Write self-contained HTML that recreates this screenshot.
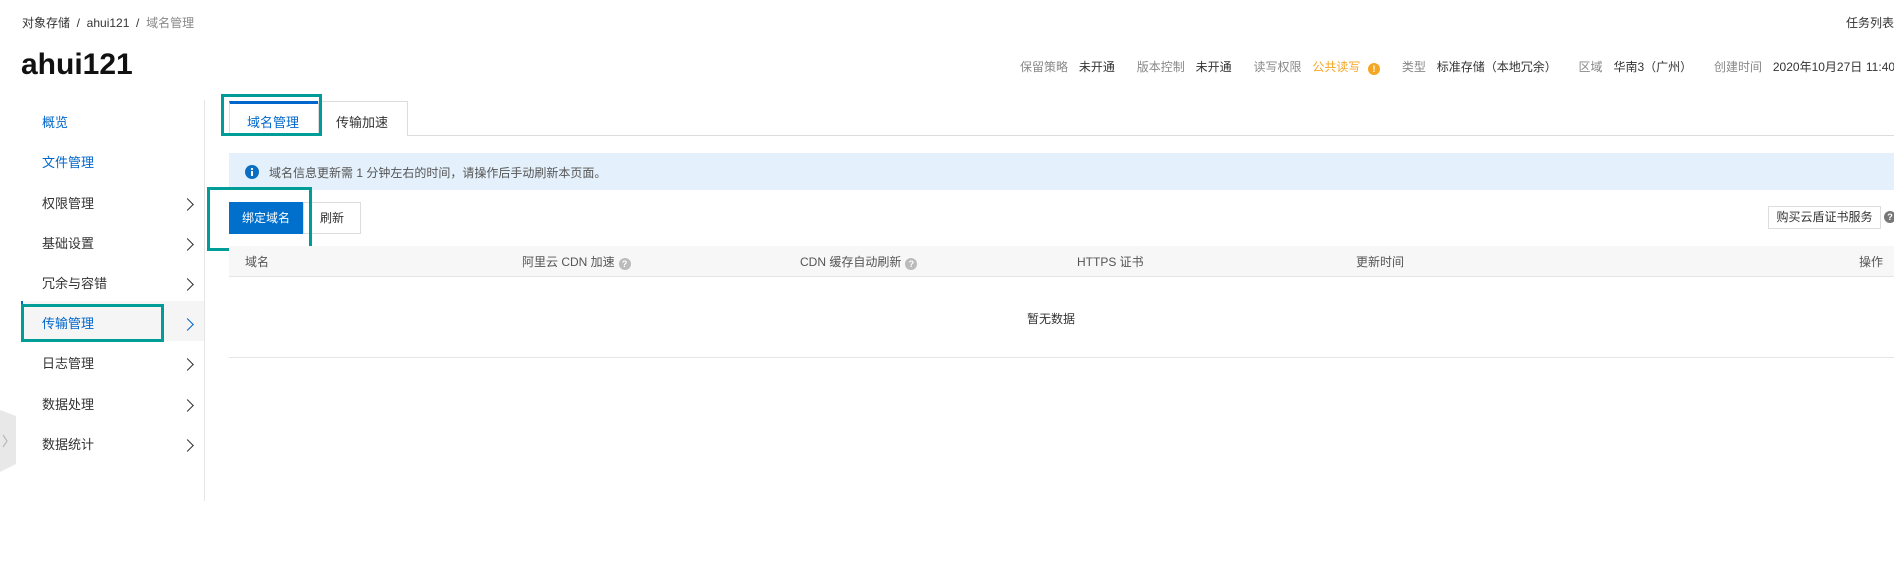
<!DOCTYPE html>
<html><head><meta charset="utf-8"><style>
*{margin:0;padding:0;box-sizing:border-box}
body{width:1894px;height:583px;background:#fff;position:relative;overflow:hidden;font-family:"Liberation Sans","Noto Sans CJK SC",sans-serif;font-size:13px;color:#333}
.a{position:absolute;white-space:nowrap}
.side{left:42px;font-size:13px;line-height:16px}
.chev{position:absolute;left:183px;width:9px;height:9px;border-right:1.5px solid #333;border-top:1.5px solid #333;transform:rotate(45deg)}
.th{top:254px;font-size:12px;color:#555;line-height:16px}
.q{display:inline-block;width:12px;height:12px;border-radius:50%;background:#bbb;color:#fff;font-size:9px;line-height:12px;text-align:center;vertical-align:-1px;margin-left:4px;font-weight:bold}
.teal{position:absolute;border:3px solid #009c97}
</style></head><body>
<div class="a" style="left:22px;top:14px;font-size:12px;color:#333">对象存储 &nbsp;/&nbsp; ahui121 &nbsp;/&nbsp; <span style="color:#888">域名管理</span></div>
<div class="a" style="right:0;top:14px;font-size:12px">任务列表</div>
<div class="a" style="left:21px;top:48px;font-size:30px;font-weight:bold;color:#111">ahui121</div>
<div class="a" style="left:1020px;top:58px;font-size:12px;color:#888;word-spacing:0.3px">保留策略 &nbsp;&nbsp;<span style="color:#333">未开通</span> &nbsp;&nbsp;&nbsp;&nbsp; 版本控制 &nbsp;&nbsp;<span style="color:#333">未开通</span> &nbsp;&nbsp;&nbsp;&nbsp; 读写权限 &nbsp;&nbsp;<span style="color:#f5a623">公共读写 <span class="q" style="background:#f5a623">!</span></span> &nbsp;&nbsp;&nbsp;&nbsp; 类型 &nbsp;&nbsp;<span style="color:#333">标准存储（本地冗余）</span> &nbsp;&nbsp;&nbsp;&nbsp; 区域 &nbsp;&nbsp;<span style="color:#333">华南3（广州）</span> &nbsp;&nbsp;&nbsp;&nbsp; 创建时间 &nbsp;&nbsp;<span style="color:#333">2020年10月27日 11:40</span></div>

<div class="a" style="left:204px;top:100px;width:1px;height:401px;background:#e5e5e5"></div>
<div class="a" style="left:21px;top:301px;width:183px;height:40px;background:#f5f5f5"></div>
<div class="a" style="left:21px;top:301px;width:2px;height:40px;background:#06c"></div>
<div class="a side" style="top:115px;color:#06c">概览</div>
<div class="a side" style="top:155px;color:#06c">文件管理</div>
<div class="a side" style="top:196px">权限管理</div><div class="chev" style="top:200px"></div>
<div class="a side" style="top:236px">基础设置</div><div class="chev" style="top:240px"></div>
<div class="a side" style="top:276px">冗余与容错</div><div class="chev" style="top:280px"></div>
<div class="a side" style="top:316px;color:#06c">传输管理</div><div class="chev" style="top:320px;border-color:#06c"></div>
<div class="a side" style="top:356px">日志管理</div><div class="chev" style="top:360px"></div>
<div class="a side" style="top:397px">数据处理</div><div class="chev" style="top:401px"></div>
<div class="a side" style="top:437px">数据统计</div><div class="chev" style="top:441px"></div>
<div class="teal" style="left:21px;top:304px;width:143px;height:38px"></div>
<svg class="a" style="left:0;top:408px" width="18" height="66"><polygon points="0,2 16,8 16,56 0,64" fill="#e8e8e8"/><path d="M3,27 L7,33 L3,39" stroke="#bbb" fill="none" stroke-width="1.3"/></svg>

<div class="a" style="left:229px;top:135px;width:1665px;height:1px;background:#ddd"></div>
<div class="a" style="left:229px;top:101px;width:90px;height:35px;background:#fff;border:1px solid #ddd;border-top:3px solid #06c;border-bottom:none"></div>
<div class="a" style="left:318px;top:101px;width:90px;height:35px;background:#fff;border:1px solid #ddd;border-bottom:none"></div>
<div class="a" style="left:247px;top:112px;font-size:13px;color:#06c">域名管理</div>
<div class="a" style="left:336px;top:112px;font-size:13px;color:#333">传输加速</div>
<div class="teal" style="left:221px;top:94px;width:101px;height:42px"></div>

<div class="a" style="left:229px;top:153px;width:1665px;height:37px;background:#e4f1fc"></div>
<svg class="a" style="left:245px;top:165px" width="14" height="14"><circle cx="7" cy="7" r="7" fill="#0a6fc2"/><rect x="6" y="6" width="2" height="5" fill="#fff"/><circle cx="7" cy="4" r="1.1" fill="#fff"/></svg>
<div class="a" style="left:269px;top:164px;font-size:12px;color:#555">域名信息更新需 1 分钟左右的时间，请操作后手动刷新本页面。</div>

<div class="a" style="left:229px;top:202px;width:74px;height:32px;background:#0070cc;color:#fff;font-size:12px;line-height:32px;text-align:center">绑定域名</div>
<div class="a" style="left:303px;top:202px;width:58px;height:32px;background:#fff;border:1px solid #ddd;font-size:12px;line-height:30px;text-align:center">刷新</div>
<div class="teal" style="left:207px;top:187px;width:105px;height:64px"></div>
<div class="a" style="left:1768px;top:206px;width:113px;height:23px;border:1px solid #ddd;font-size:12px;line-height:21px;text-align:center">购买云盾证书服务</div>
<span class="a q" style="left:1884px;top:211px;margin:0;background:#777">?</span>

<div class="a" style="left:229px;top:246px;width:1665px;height:31px;background:#f7f7f7;border-bottom:1px solid #e5e5e5"></div>
<div class="a th" style="left:245px">域名</div>
<div class="a th" style="left:522px">阿里云 CDN 加速<span class="q">?</span></div>
<div class="a th" style="left:800px">CDN 缓存自动刷新<span class="q">?</span></div>
<div class="a th" style="left:1077px">HTTPS 证书</div>
<div class="a th" style="left:1356px">更新时间</div>
<div class="a th" style="left:1859px">操作</div>
<div class="a" style="left:1027px;top:310px;font-size:12px">暂无数据</div>
<div class="a" style="left:229px;top:357px;width:1665px;height:1px;background:#e5e5e5"></div>
</body></html>
